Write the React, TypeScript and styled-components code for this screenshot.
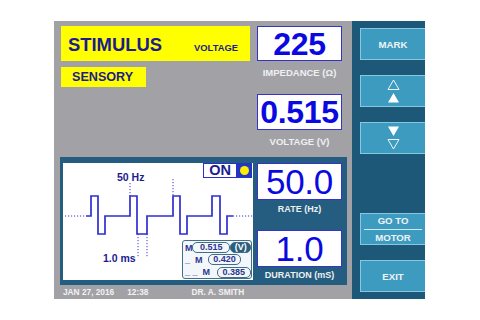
import React from "react";
import styled, { createGlobalStyle } from "styled-components";

const GlobalStyle = createGlobalStyle`
  html, body {
    margin: 0;
    padding: 0;
    background: #ffffff;
  }
  body {
    font-family: "Liberation Sans", Arial, sans-serif;
  }
`;

const NAVY = "#1c1c8e";
const BLUE = "#0a0ae0";
const PANEL = "#245d7f";
const LABEL = "#eef0f2";

const Device = styled.div`
  display: flex;
  width: 371px;
  height: 278px;
  margin: 21px 0 0 54px;
`;

const Console = styled.div`
  width: 298px;
  box-sizing: border-box;
  background: #a2a2a6;
  padding: 5px 5px 0 6px;
  display: flex;
  flex-direction: column;
`;

const TopArea = styled.div`
  display: grid;
  grid-template-columns: 189px 85px;
  column-gap: 7px;
  padding-left: 1px;
  height: 131px;
`;

const LeftColumn = styled.div`
  display: flex;
  flex-direction: column;
  align-items: flex-start;
`;

const StimBox = styled.div`
  width: 189px;
  height: 35px;
  box-sizing: border-box;
  background: #ffff00;
  display: flex;
  align-items: baseline;
  justify-content: space-between;
  padding: 8px 12px 0 7px;
  color: ${NAVY};
  font-weight: bold;
`;

const StimTitle = styled.span`
  font-size: 18.4px;
`;

const StimMode = styled.span`
  font-size: 9.4px;
`;

const SensoryBox = styled.div`
  margin-top: 6px;
  width: 85px;
  height: 20px;
  box-sizing: border-box;
  background: #ffff00;
  color: ${NAVY};
  font-weight: bold;
  font-size: 12.6px;
  line-height: 20px;
  padding-left: 11px;
`;

const RightColumn = styled.div`
  display: flex;
  flex-direction: column;
`;

const Readout = styled.div<{ $h: number; $size: number; $weight: string }>`
  height: ${(p) => p.$h}px;
  box-sizing: border-box;
  background: #ffffff;
  border: 1px solid #3434c8;
  display: flex;
  align-items: center;
  justify-content: center;
  color: ${BLUE};
  font-size: ${(p) => p.$size}px;
  font-weight: ${(p) => p.$weight};
  line-height: 1;
  letter-spacing: -0.3px;
`;

const ReadoutLabel = styled.div<{ $top: number; $bottom: number; $size: number }>`
  margin: ${(p) => p.$top}px 0 ${(p) => p.$bottom}px;
  height: 10px;
  line-height: 10px;
  text-align: center;
  white-space: nowrap;
  color: ${LABEL};
  font-weight: bold;
  font-size: ${(p) => p.$size}px;
`;

const Panel = styled.div`
  height: 128px;
  box-sizing: border-box;
  background: ${PANEL};
  padding: 6px 5px 5px 3px;
  display: grid;
  grid-template-columns: 190px 85px;
  column-gap: 4px;
`;

const WaveArea = styled.div`
  position: relative;
  background: #ffffff;
  height: 117px;
`;

const OnIndicator = styled.div`
  position: absolute;
  top: 0;
  right: 1px;
  display: flex;
  height: 15px;
`;

const OnText = styled.div`
  width: 34px;
  box-sizing: border-box;
  border: 1.5px solid #2c2cd0;
  background: #ffffff;
  color: ${NAVY};
  font-weight: bold;
  font-size: 14.5px;
  line-height: 12px;
  text-align: center;
`;

const Lamp = styled.div`
  width: 15px;
  background: #2236c4;
  display: flex;
  align-items: center;
  justify-content: center;
  &::after {
    content: "";
    width: 9px;
    height: 9px;
    border-radius: 50%;
    background: #ffee00;
  }
`;

const MeasureBox = styled.div`
  position: absolute;
  right: 1px;
  bottom: 1px;
  width: 70px;
  height: 39px;
  box-sizing: border-box;
  border: 1px solid #3f6d8a;
  border-radius: 3px;
  background: #f4f7f9;
  padding: 1px 0 0 2px;
  display: flex;
  flex-direction: column;
  gap: 1px;
`;

const MeasureRow = styled.div`
  display: flex;
  align-items: center;
  height: 12px;
  color: #2a3690;
  font-weight: bold;
  font-size: 9px;
`;

const MeasureTag = styled.span<{ $w: number }>`
  width: ${(p) => p.$w}px;
  white-space: pre;
`;

const Pill = styled.span<{ $w: number; $dark?: boolean }>`
  width: ${(p) => p.$w}px;
  height: 11px;
  box-sizing: border-box;
  border: 1px solid #3f6d8a;
  border-radius: 5px;
  background: ${(p) => (p.$dark ? "#2b5e7e" : "transparent")};
  color: ${(p) => (p.$dark ? "#ffffff" : "#2a3690")};
  text-align: center;
  line-height: 9px;
`;

const SideReadouts = styled.div`
  display: flex;
  flex-direction: column;
`;

const Footer = styled.div`
  height: 14px;
  display: flex;
  align-items: center;
  padding-left: 3px;
  color: #f2f2f2;
  font-weight: bold;
  font-size: 8.3px;
`;

const FooterItem = styled.span<{ $gap: number }>`
  margin-left: ${(p) => p.$gap}px;
  white-space: pre;
`;

const Sidebar = styled.div`
  width: 73px;
  box-sizing: border-box;
  background: #1e5878;
  padding: 7px 0 7px 8px;
  display: flex;
  flex-direction: column;
  gap: 15px;
`;

const SideButton = styled.button<{ $push?: boolean }>`
  height: 32px;
  width: 65px;
  box-sizing: border-box;
  margin: ${(p) => (p.$push ? "auto 0 0" : "0")};
  padding: 0;
  background: #3e9bc0;
  border: 1px solid #86c8e2;
  border-right: none;
  color: #eef3f6;
  font-family: "Liberation Sans", Arial, sans-serif;
  font-weight: bold;
  font-size: 9.6px;
  display: flex;
  flex-direction: column;
  align-items: center;
  justify-content: center;
`;

const SplitLine = styled.span`
  width: 58px;
  height: 1px;
  background: #cfe8f2;
  margin: 3px 0 2px;
`;

function Arrows({ dir }: { dir: "up" | "down" }) {
  const tri = "M6.5 1 L12 10.5 L1 10.5 Z";
  return (
    <svg width="13" height="24" viewBox="0 0 13 24">
      {dir === "up" ? (
        <>
          <path d={tri} fill="none" stroke="#ffffff" strokeWidth="0.9" />
          <path d={tri} transform="translate(0 13)" fill="#ffffff" />
        </>
      ) : (
        <>
          <path d={tri} transform="translate(0 11) scale(1 -1)" fill="#ffffff" />
          <path d={tri} transform="translate(0 24) scale(1 -1)" fill="none" stroke="#ffffff" strokeWidth="0.9" />
        </>
      )}
    </svg>
  );
}

function Waveform() {
  const wave =
    "M23 53 H28 V33 H35 V71 H42 V53 H67 V33 H74 V71 H84 V53 H110 V33 H117 V71 H124 V53 H149 V33 H157 V71 H164 V53 H170";
  const dots = { stroke: "#3a3ad0", strokeWidth: 1, strokeDasharray: "1.2 1.8", fill: "none" };
  return (
    <svg width="190" height="117" viewBox="0 0 190 117" style={{ display: "block" }}>
      <path d="M2 53 H23" {...dots} />
      <path d="M170 53 H190" {...dots} />
      <path d="M67 20 V33" {...dots} />
      <path d="M110 16 V33" {...dots} />
      <path d="M75 71 V94" {...dots} />
      <path d="M84 71 V94" {...dots} />
      <path d={wave} fill="none" stroke="#2e2ed2" strokeWidth="1.7" />
      <text x="54" y="18" fill={NAVY} fontSize="10.5" fontWeight="bold" fontFamily="Liberation Sans, Arial, sans-serif">
        50 Hz
      </text>
      <text x="40" y="99" fill={NAVY} fontSize="10.5" fontWeight="bold" fontFamily="Liberation Sans, Arial, sans-serif">
        1.0 ms
      </text>
    </svg>
  );
}

export default function App() {
  return (
    <>
      <GlobalStyle />
      <Device>
        <Console>
          <TopArea>
            <LeftColumn>
              <StimBox>
                <StimTitle>STIMULUS</StimTitle>
                <StimMode>VOLTAGE</StimMode>
              </StimBox>
              <SensoryBox>SENSORY</SensoryBox>
            </LeftColumn>
            <RightColumn>
              <Readout $h={35} $size={32} $weight="bold">
                225
              </Readout>
              <ReadoutLabel $top={7} $bottom={16} $size={9.5}>
                IMPEDANCE (Ω)
              </ReadoutLabel>
              <Readout $h={36} $size={32} $weight="bold">
                0.515
              </Readout>
              <ReadoutLabel $top={7} $bottom={0} $size={9.5}>
                VOLTAGE (V)
              </ReadoutLabel>
            </RightColumn>
          </TopArea>
          <Panel>
            <WaveArea>
              <Waveform />
              <OnIndicator>
                <OnText>ON</OnText>
                <Lamp />
              </OnIndicator>
              <MeasureBox>
                <MeasureRow>
                  <MeasureTag $w={7}>M</MeasureTag>
                  <Pill $w={39}>0.515</Pill>
                  <Pill $w={21} $dark>
                    (V)
                  </Pill>
                </MeasureRow>
                <MeasureRow>
                  <MeasureTag $w={23}>_  M</MeasureTag>
                  <Pill $w={33}>0.420</Pill>
                </MeasureRow>
                <MeasureRow>
                  <MeasureTag $w={32}>_ _  M</MeasureTag>
                  <Pill $w={35}>0.385</Pill>
                </MeasureRow>
              </MeasureBox>
            </WaveArea>
            <SideReadouts>
              <Readout $h={37} $size={35} $weight="normal">
                50.0
              </Readout>
              <ReadoutLabel $top={4} $bottom={16} $size={9}>
                RATE (Hz)
              </ReadoutLabel>
              <Readout $h={37} $size={35} $weight="normal">
                1.0
              </Readout>
              <ReadoutLabel $top={3} $bottom={0} $size={9}>
                DURATION (mS)
              </ReadoutLabel>
            </SideReadouts>
          </Panel>
          <Footer>
            <FooterItem $gap={0}>JAN 27, 2016</FooterItem>
            <FooterItem $gap={13}>12:38</FooterItem>
            <FooterItem $gap={43}>DR. A. SMITH</FooterItem>
          </Footer>
        </Console>
        <Sidebar>
          <SideButton>MARK</SideButton>
          <SideButton>
            <Arrows dir="up" />
          </SideButton>
          <SideButton>
            <Arrows dir="down" />
          </SideButton>
          <SideButton $push>
            GO TO
            <SplitLine />
            MOTOR
          </SideButton>
          <SideButton>EXIT</SideButton>
        </Sidebar>
      </Device>
    </>
  );
}
